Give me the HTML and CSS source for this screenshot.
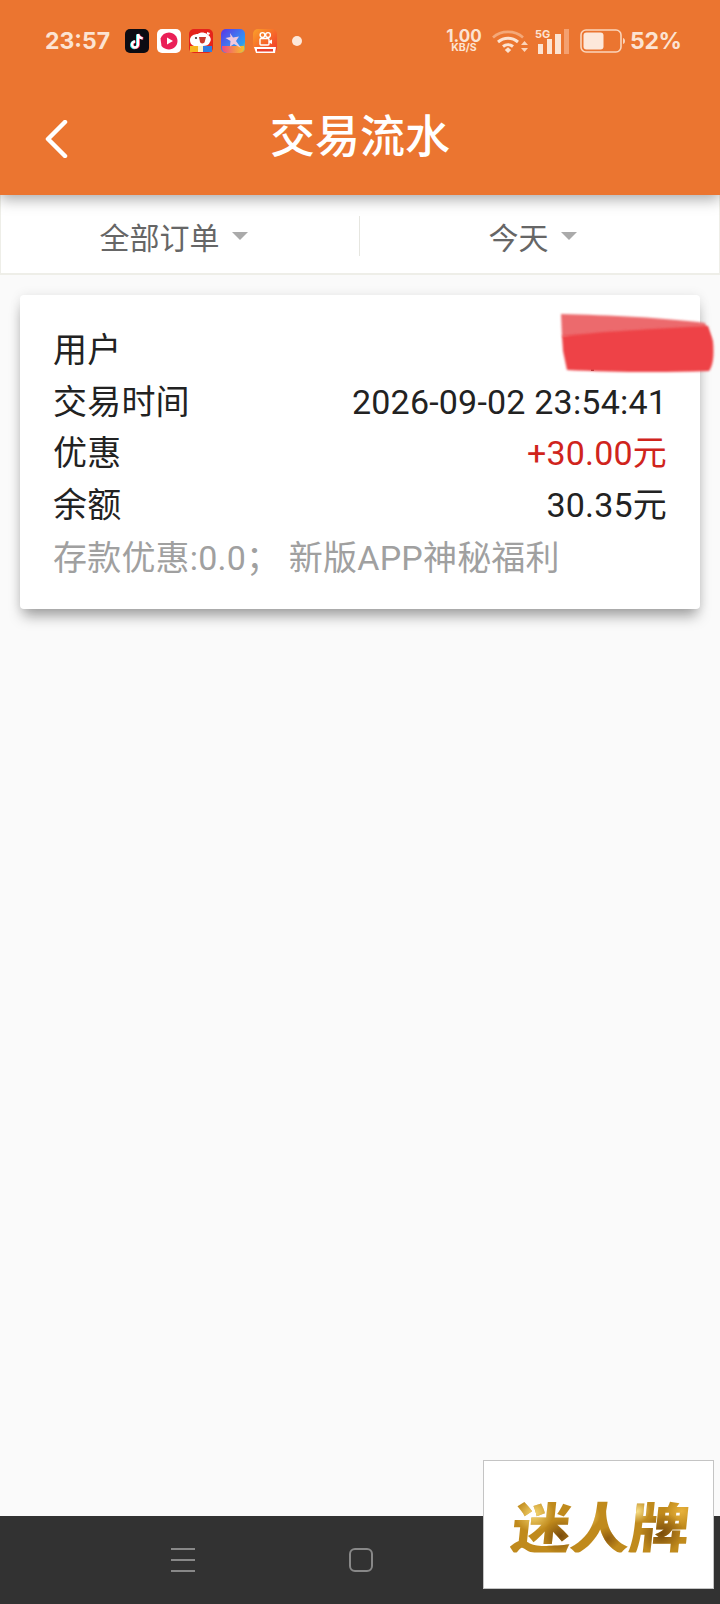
FILE: index.html
```html
<html>
<head>
    <meta charset="utf-8">
    <title>交易流水</title>
    <link rel="stylesheet" href="styles.css">
</head>
<body>
<div class="page">
    <div class="topbar">
        <div class="status">
            <span class="clock">23:57</span>
            <div class="apps">
                <svg class="app" viewBox="0 0 24 24">
                    <rect width="24" height="24" rx="5" fill="#0b0b12"/>
                    <path d="M13 5v10.500a3 3 0 1 1-3-3" fill="none" stroke="#25e3e6" stroke-width="2.600" transform="translate(-.7 .4)"/>
                    <path d="M13 5v10.500a3 3 0 1 1-3-3M13 5c.4 2.600 2 4 4.600 4.200" fill="none" stroke="#fe2c55" stroke-width="2.600" transform="translate(.7 .2)"/>
                    <path d="M13 5v10.500a3 3 0 1 1-3-3M13 5c.4 2.600 2 4 4.600 4.200" fill="none" stroke="#fff" stroke-width="2.400"/>
                </svg>
                <svg class="app" viewBox="0 0 24 24">
                    <rect width="24" height="24" rx="5" fill="#fff"/>
                    <path d="M12 3.500c4.700 0 8.500 3.800 8.500 8.500s-3.800 8.500-8.500 8.500c-2.500 0-6-1.500-7.500-3.500L3.500 9.500C5 5.500 8 3.500 12 3.500z" fill="#ea1f57"/>
                    <path d="M10 8.500l6 3.500-6 3.500z" fill="#fff"/>
                </svg>
                <svg class="app" viewBox="0 0 24 24">
                    <rect width="24" height="24" rx="5" fill="#e5231b"/>
                    <path d="M1 11c0-4 4-6 8-6 2-2 6-2 9 0 3 2 5 5 3 8-1 3-4 4-7 4H5c-3-1-4-3-4-6z" fill="#fff"/>
                    <path d="M10 8h7l-1.500 5.500c-2 1.500-4 1-4.500-.5z" fill="#c9392c"/>
                    <path d="M18 3l3 1-1 2-2-1z" fill="#fff"/>
                    <circle cx="7" cy="9" r="1.100" fill="#333"/>
                    <rect x="1" y="17" width="8" height="6" fill="#f7b51e"/>
                    <rect x="9" y="17" width="5" height="6" fill="#fdf0c8"/>
                    <rect x="14" y="17" width="9" height="6" fill="#2f7de0"/>
                </svg>
                <svg class="app" viewBox="0 0 24 24">
                    <defs>
                        <linearGradient id="star-bg" x1="0" y1="0" x2="1" y2="1">
                            <stop offset="0" stop-color="#5a34e6"/>
                            <stop offset=".5" stop-color="#3f7cf0"/>
                            <stop offset=".75" stop-color="#2a9df0"/>
                            <stop offset="1" stop-color="#f6c52a"/>
                        </linearGradient>
                        <linearGradient id="star-low" x1="0" y1="0" x2="1" y2="0">
                            <stop offset="0" stop-color="#ef4a80"/>
                            <stop offset="1" stop-color="#f8c02a"/>
                        </linearGradient>
                    </defs>
                    <rect width="24" height="24" rx="5" fill="url(#star-bg)"/>
                    <path d="M1 17h22v2a5 5 0 0 1-5 5H6a5 5 0 0 1-5-5z" fill="url(#star-low)"/>
                    <path d="M9 4l3 4.500 6-1-3 4.500 5 7-7-4-4 2.500 .5-5.500-5-3 5-1z" fill="#f0c8dc"/>
                </svg>
                <svg class="app" viewBox="0 0 24 24">
                    <defs>
                        <linearGradient id="cam-bg" x1="0" y1="0" x2="1" y2="1">
                            <stop offset="0" stop-color="#fba12a"/>
                            <stop offset="1" stop-color="#f2352a"/>
                        </linearGradient>
                    </defs>
                    <rect width="24" height="24" rx="5" fill="url(#cam-bg)"/>
                    <circle cx="9.500" cy="6" r="2.400" fill="none" stroke="#fff" stroke-width="1.400"/>
                    <circle cx="15" cy="6" r="2.400" fill="none" stroke="#fff" stroke-width="1.400"/>
                    <rect x="7" y="9.500" width="9" height="6.500" rx="1" fill="none" stroke="#fff" stroke-width="1.400"/>
                    <path d="M16 12l3-1.500v4.500l-3-1.500z" fill="#fff"/>
                    <path d="M1 18h22l-1 6H3z" fill="#fff"/>
                    <rect x="4" y="20" width="16" height="2.500" fill="#e8402c"/>
                </svg>
                <span class="dot"></span>
            </div>
            <div class="indicators">
                <div class="speed">
                    <span class="speed-num">1.00</span>
                    <span class="speed-unit">KB/S</span>
                </div>
                <svg class="wifi" width="36" height="26" viewBox="0 0 36 26">
                    <path d="M1 9.500C9 2 23 2 31 9.500" fill="none" stroke="#f4a878" stroke-width="2.600"/>
                    <path d="M6 14c6-5 14-5 20 0M11 18.500c3-2.500 7-2.500 10 0" fill="none" stroke="#fce3d2" stroke-width="3"/>
                    <path d="M12.800 22l3.200-2.800 3.200 2.800-3.200 3z" fill="#fce3d2"/>
                    <path d="M29 17l3.500-4 3.500 4zM29 20h7l-3.500 4z" fill="#fbd5bb"/>
                </svg>
                <div class="signal">
                    <span class="signal-tag">5G</span>
                    <svg width="34" height="25" viewBox="0 0 34 25">
                        <rect x="3" y="15" width="5" height="10" fill="#fce3d2"/>
                        <rect x="12" y="10" width="5" height="15" fill="#fce3d2"/>
                        <rect x="20" y="5" width="6" height="20" fill="#fce3d2"/>
                        <rect x="29" y="0" width="5" height="25" fill="#f4a070"/>
                    </svg>
                </div>
                <svg class="battery" width="45" height="24" viewBox="0 0 45 24">
                    <rect x="1" y="1" width="40" height="22" rx="5" fill="none" stroke="#fbd5bb" stroke-width="1.600"/>
                    <rect x="3.500" y="3.500" width="20" height="17" rx="3" fill="#fde8da"/>
                    <path d="M43 9c1.500 .5 2 1.500 2 3s-.5 2.500-2 3z" fill="#fbd5bb"/>
                </svg>
                <span class="percent">52%</span>
            </div>
        </div>
        <div class="titlebar">
            <svg class="back" width="24" height="38" viewBox="0 0 24 38">
                <path d="M21 2L4 19l17 17" fill="none" stroke="#fff" stroke-width="4.500" stroke-linecap="round" stroke-linejoin="round"/>
            </svg>
            <h1>交易流水</h1>
        </div>
    </div>

    <div class="filters">
        <div class="filter"><span>全部订单</span><i class="caret"></i></div>
        <div class="filter-line"></div>
        <div class="filter"><span>今天</span><i class="caret"></i></div>
    </div>

    <div class="content">
        <div class="card">
            <div class="row"><span>用户</span></div>
            <div class="row"><span>交易时间</span><span>2026-09-02 23:54:41</span></div>
            <div class="row"><span>优惠</span><span class="plus">+30.00元</span></div>
            <div class="row"><span>余额</span><span>30.35元</span></div>
            <div class="row note"><span>存款优惠:0.0；&nbsp;新版APP神秘福利</span></div>
            <svg class="scribble" width="160" height="64" viewBox="0 0 160 64">
                <defs>
                    <filter id="soft"><feGaussianBlur stdDeviation="1.200"/></filter>
                </defs>
                <rect x="33" y="56" width="3" height="4" fill="#5a2a2a"/>
                <path d="M3 3C50 4 110 7 147 12L153 28 4 26z" fill="#ec6a6d" filter="url(#soft)"/>
                <path d="M4 25C50 20 110 17 150 15L155 30Q157 52 151 60C100 62 50 61 9 59L5 40z" fill="#ee4347" filter="url(#soft)"/>
            </svg>
        </div>
    </div>

    <div class="navbar">
        <div class="nav-menu"><b></b><b></b><b></b></div>
        <div class="nav-home"></div>
    </div>

    <div class="logo-box">
        <span class="logo-text">迷人牌</span>
    </div>
</div>
</body>
</html>
```

FILE: styles.css
```css
html, body {
    margin: 0;
    padding: 0;
}
body {
    font-family: Roboto, "Noto Sans CJK SC", sans-serif;
    background-color: #fafafa;
}
.page {
    position: relative;
    width: 720px;
    height: 1604px;
    display: flex;
    flex-direction: column;
    overflow: hidden;
}
.topbar {
    height: 195px;
    flex-shrink: 0;
    background-color: #eb7530;
    box-shadow: 0 4px 14px rgba(0,0,0,0.35);
    position: relative;
    z-index: 2;
}
.status {
    height: 82px;
    display: flex;
    align-items: center;
    padding-left: 45px;
    color: #fce3d2;
}
.clock {
    font-family: Inter, Roboto, sans-serif;
    font-size: 23px;
    font-weight: 700;
    width: 80px;
}
.apps {
    display: flex;
    align-items: center;
    gap: 8px;
}
.app {
    width: 24px;
    height: 24px;
}
.dot {
    width: 10px;
    height: 10px;
    border-radius: 50%;
    background-color: #fde8da;
    margin-left: 7px;
}
.indicators {
    margin-left: auto;
    width: 275px;
    display: flex;
    align-items: center;
}
.speed {
    width: 38px;
    display: flex;
    flex-direction: column;
    align-items: center;
    font-family: Inter, Roboto, sans-serif;
    font-weight: 700;
}
.speed-num {
    font-size: 17px;
    line-height: 14px;
}
.speed-unit {
    font-size: 10.500px;
    line-height: 10px;
}
.wifi {
    margin-left: 9px;
}
.signal {
    position: relative;
    margin-left: 7px;
    height: 25px;
}
.signal-tag {
    position: absolute;
    left: 0;
    top: -1px;
    font-family: Inter, Roboto, sans-serif;
    font-size: 11px;
    line-height: 12px;
    font-weight: 700;
}
.battery {
    margin-left: 11px;
}
.percent {
    font-family: Inter, Roboto, sans-serif;
    font-size: 23px;
    font-weight: 700;
    letter-spacing: -0.3px;
    margin-left: 5px;
}
.titlebar {
    height: 113px;
    display: flex;
    align-items: center;
    position: relative;
}
.back {
    margin-left: 44px;
}
h1 {
    position: absolute;
    left: 0;
    right: 0;
    top: 27px;
    margin: 0;
    text-align: center;
    font-size: 45px;
    line-height: 58px;
    font-weight: 500;
    color: #fff;
}
.filters {
    height: 80px;
    flex-shrink: 0;
    box-sizing: border-box;
    display: flex;
    align-items: center;
    padding-top: 3px;
    background-color: #fff;
    border: 1px solid #eeeee8;
    border-width: 0 1px 2px 1px;
    color: #666;
}
.filter {
    flex: 1;
    display: flex;
    justify-content: center;
    align-items: center;
    gap: 12px;
    padding-right: 14px;
    font-size: 30px;
}
.filter-line {
    width: 1px;
    height: 40px;
    margin-left: -1px;
    background-color: #e6e6e0;
}
.caret {
    width: 0;
    height: 0;
    border-left: 8px solid transparent;
    border-right: 8px solid transparent;
    border-top: 8px solid #aaa;
}
.content {
    flex: 1;
    padding: 20px 20px 0 20px;
}
.card {
    position: relative;
    background-color: #fff;
    border-radius: 4px;
    padding: 30px 33px 24px 33px;
    box-shadow: 0 10px 14px -3px rgba(0,0,0,0.35), 0 0 12px rgba(0,0,0,0.08);
    color: #222;
}
.row {
    display: flex;
    justify-content: space-between;
    font-size: 34px;
    letter-spacing: 0.2px;
    line-height: 51.500px;
    height: 51.500px;
}
.plus {
    color: #d0241c;
}
.note {
    color: #a0a0a0;
    margin-top: 2px;
}
.scribble {
    position: absolute;
    left: 538px;
    top: 16px;
}
.navbar {
    height: 88px;
    flex-shrink: 0;
    background-color: #323232;
    display: flex;
    align-items: center;
    padding-left: 171px;
    gap: 154px;
}
.nav-menu {
    width: 24px;
    height: 24px;
    display: flex;
    flex-direction: column;
    justify-content: space-between;
}
.nav-menu b {
    height: 2px;
    background-color: #888;
}
.nav-home {
    width: 20px;
    height: 20px;
    border: 2px solid #888;
    border-radius: 6px;
}
.logo-box {
    position: absolute;
    left: 483px;
    top: 1460px;
    width: 231px;
    height: 129px;
    box-sizing: border-box;
    border: 1px solid #c4c4c4;
    background-color: #fff;
    display: flex;
    justify-content: center;
    align-items: center;
}
.logo-text {
    font-family: "Noto Sans CJK SC", sans-serif;
    font-size: 60px;
    font-weight: 900;
    line-height: 1;
    letter-spacing: -1px;
    margin-left: 3px;
    transform: skewX(-6deg) scaleY(0.92);
    background-color: #c08a1c;
    background-image:
        radial-gradient(circle at 12% 30%, #f6d873 0, transparent 12%),
        radial-gradient(circle at 28% 70%, #7a4c0c 0, transparent 14%),
        radial-gradient(circle at 42% 35%, #f2cc5c 0, transparent 12%),
        radial-gradient(circle at 55% 75%, #8f5c10 0, transparent 12%),
        radial-gradient(circle at 70% 25%, #f8e08a 0, transparent 10%),
        radial-gradient(circle at 85% 65%, #7a4c0c 0, transparent 14%),
        radial-gradient(circle at 95% 25%, #e8b23c 0, transparent 10%);
    -webkit-background-clip: text;
    background-clip: text;
    color: transparent;
}
```
